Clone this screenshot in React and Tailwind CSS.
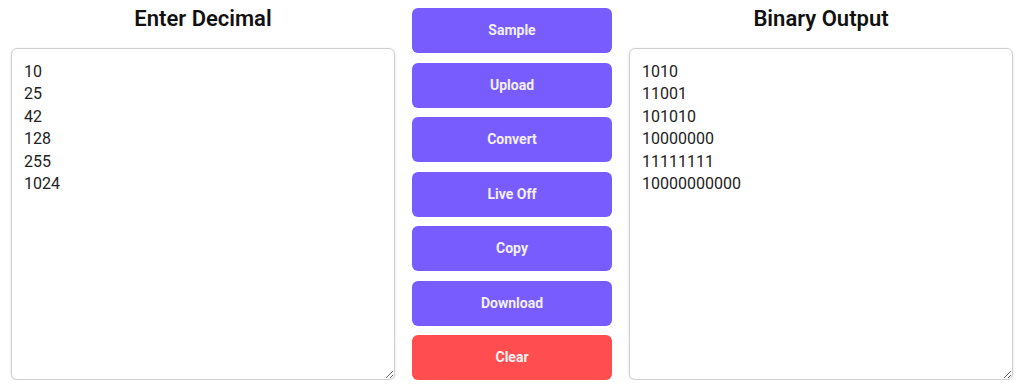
import { useState } from 'react';

const buttons = ['Sample', 'Upload', 'Convert', 'Live Off', 'Copy', 'Download'];

export default function App() {
  const [input, setInput] = useState('10\n25\n42\n128\n255\n1024');
  const output = input
    .split('\n')
    .map((l) => (l.trim() === '' || isNaN(Number(l)) ? '' : Number(l).toString(2)))
    .join('\n');

  return (
    <div className="flex gap-[17px] px-[11px] pt-2 font-['Roboto',sans-serif] bg-white">
      <div className="flex flex-col w-[384px]">
        <h2 className="text-[22px] leading-[22px] font-semibold text-[#111] text-center mb-[18px]">Enter Decimal</h2>
        <textarea
          value={input}
          onChange={(e) => setInput(e.target.value)}
          className="h-[332px] w-full border border-[#cfcfcf] rounded-[6px] shadow-[0_1px_3px_rgba(0,0,0,0.12)] px-3 py-3 text-[16px] leading-[22.4px] text-[#222] outline-none"
        />
      </div>

      <div className="flex flex-col gap-[9.5px] w-[200px]">
        {buttons.map((b) => (
          <button
            key={b}
            className="h-[45px] rounded-[6px] bg-[#785cfd] text-[#f3efff] text-[14px] font-bold"
          >
            {b}
          </button>
        ))}
        <button className="h-[45px] rounded-[6px] bg-[#ff4d50] text-[#fff3f3] text-[14px] font-bold">
          Clear
        </button>
      </div>

      <div className="flex flex-col w-[384px]">
        <h2 className="text-[22px] leading-[22px] font-semibold text-[#111] text-center mb-[18px]">Binary Output</h2>
        <textarea
          readOnly
          value={output}
          className="h-[332px] w-full border border-[#cfcfcf] rounded-[6px] shadow-[0_1px_3px_rgba(0,0,0,0.12)] px-3 py-3 text-[16px] leading-[22.4px] text-[#222] outline-none"
        />
      </div>
    </div>
  );
}
